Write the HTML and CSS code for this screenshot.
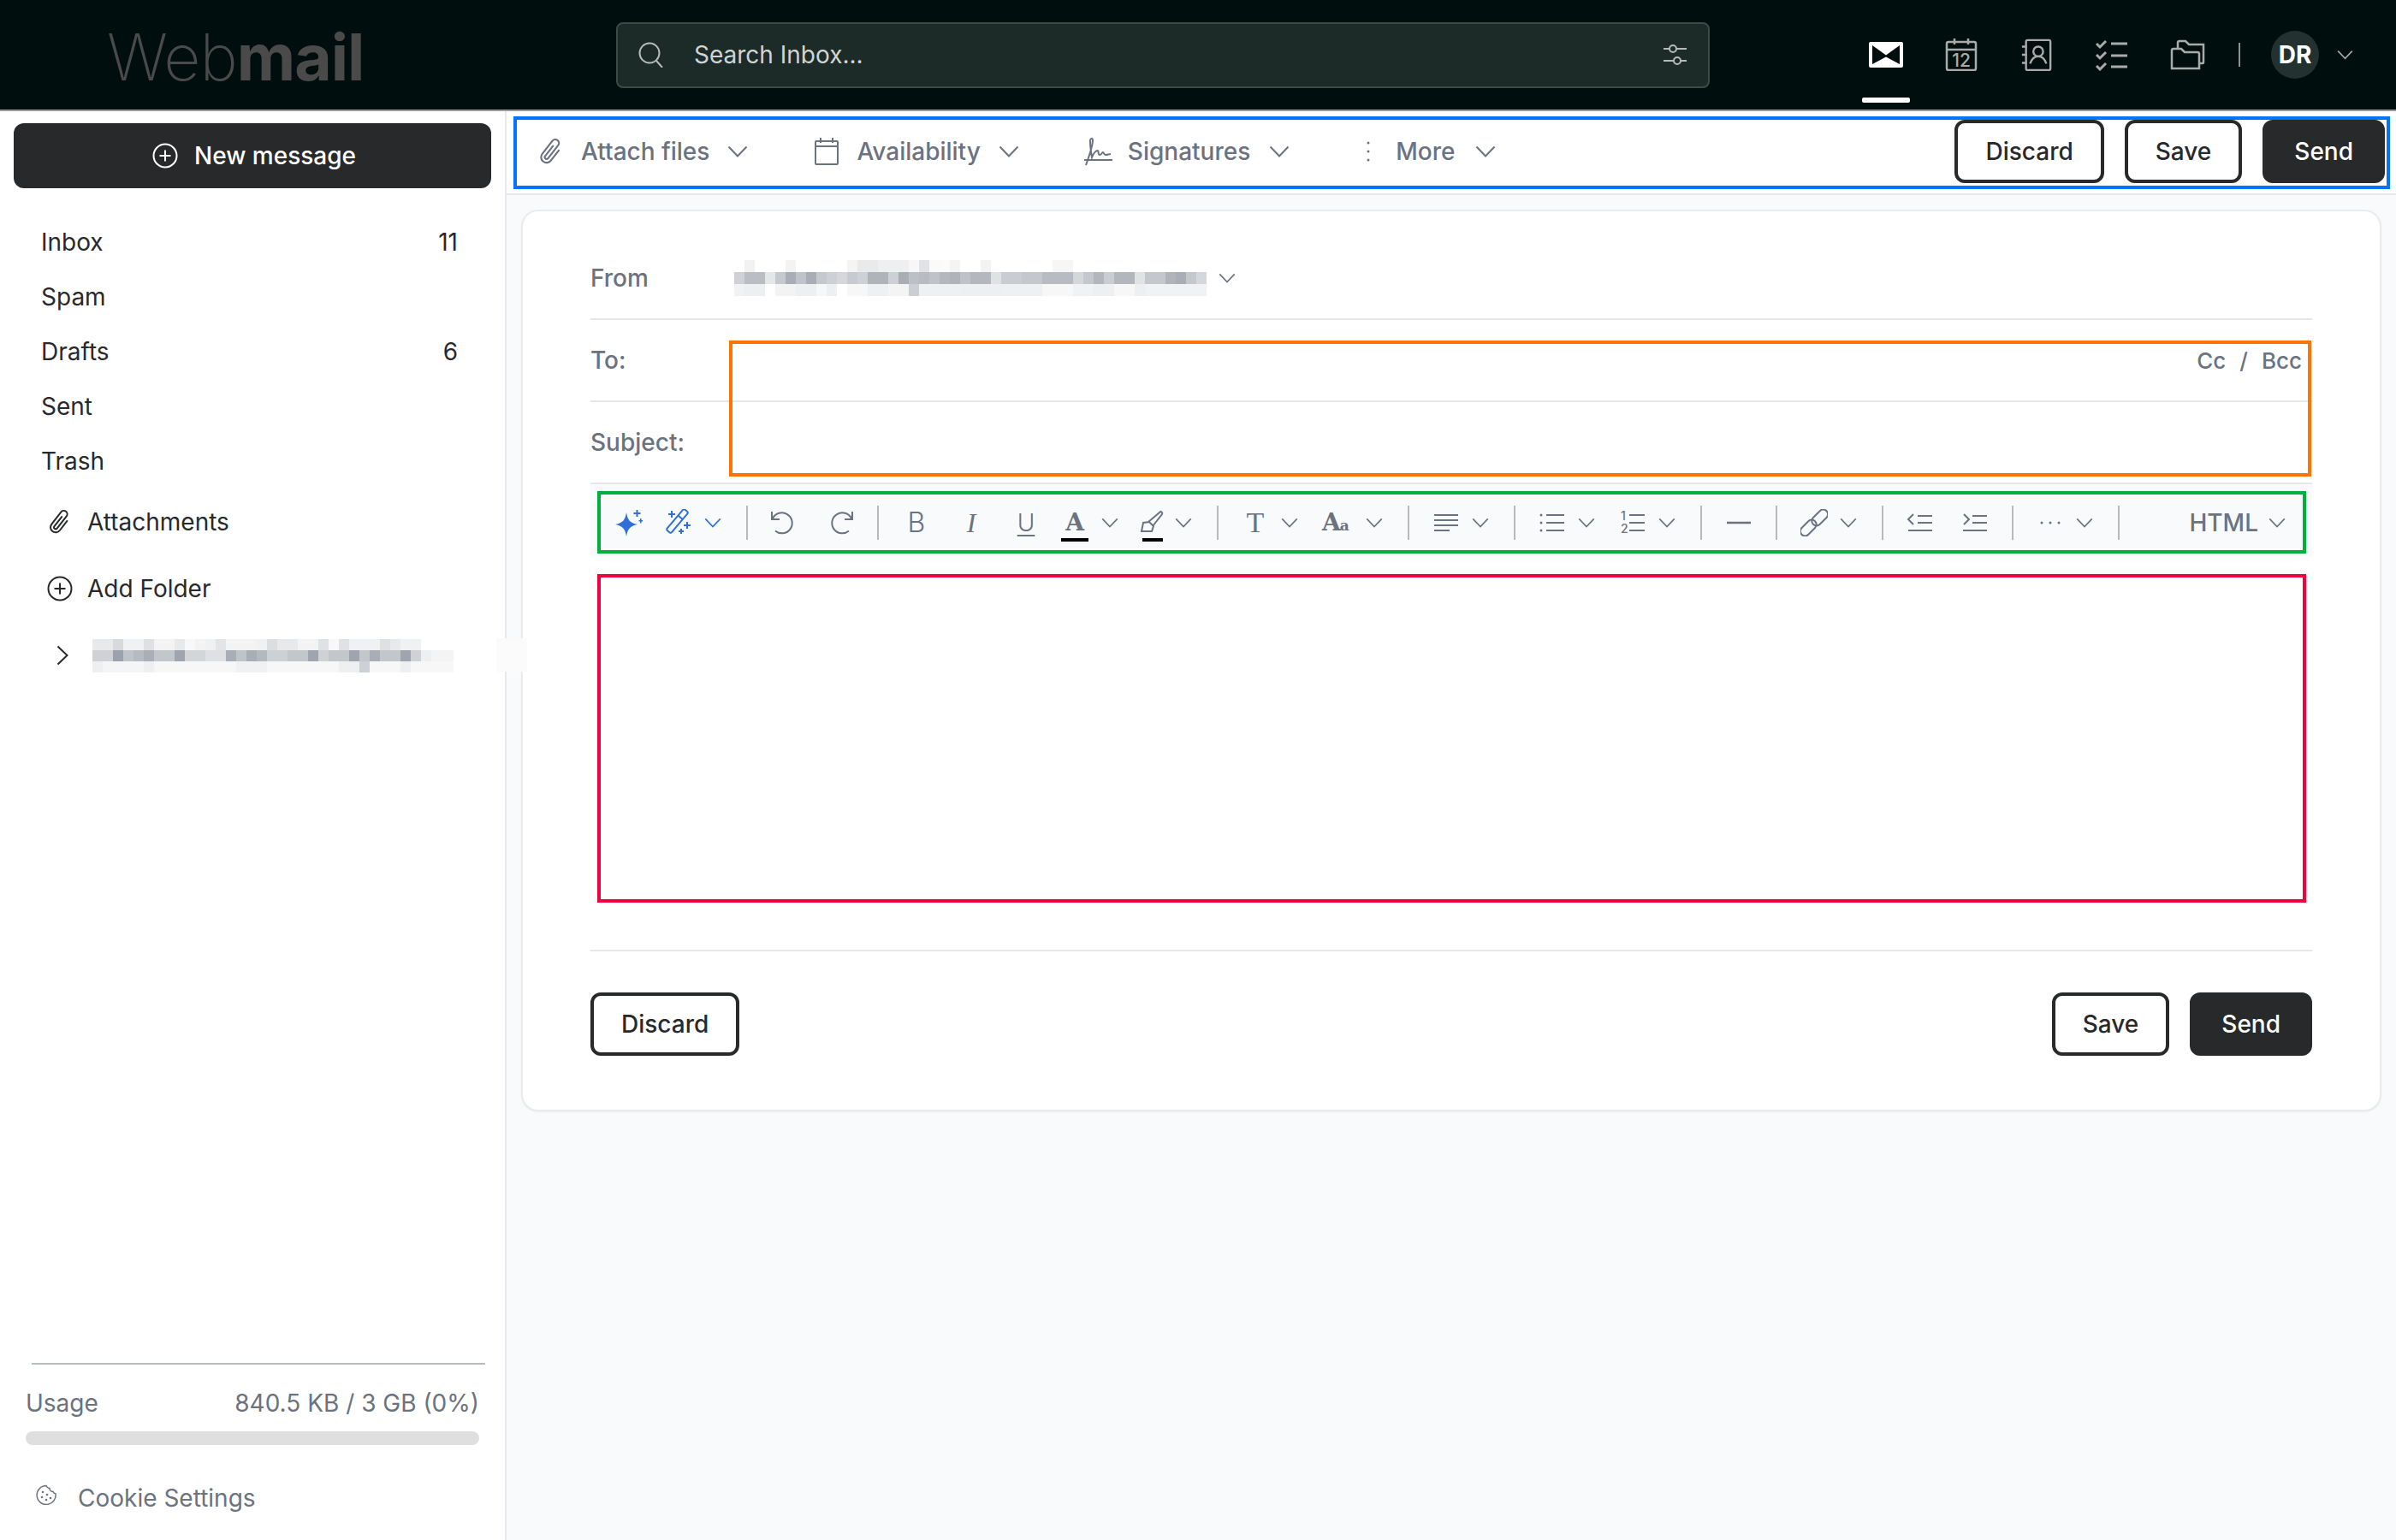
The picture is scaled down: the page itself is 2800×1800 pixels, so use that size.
FILE: index.html
```html
<!DOCTYPE html>
<html lang="en">
<head>
    <meta charset="UTF-8">
    <title>Webmail</title>
    <link rel="stylesheet" href="styles.css">
</head>
<body>

<svg class="sprite" aria-hidden="true">
    <symbol id="chev" viewBox="0 0 24 14"><path d="M1.5 1.5 12 12.5 22.500 1.500" fill="none" stroke="currentColor" stroke-width="2"/></symbol>
    <symbol id="clip" viewBox="1.500 0.500 13 15"><path transform="rotate(38 8 8)" fill="currentColor" d="M4.500 3a2.500 2.500 0 0 1 5 0v9a1.500 1.500 0 0 1-3 0V5a.5.5 0 0 1 1 0v7a.5.5 0 0 0 1 0V3a1.500 1.500 0 1 0-3 0v9a2.500 2.500 0 0 0 5 0V5a.5.5 0 0 1 1 0v7a3.500 3.500 0 1 1-7 0z"/></symbol>
    <symbol id="plus-circle" viewBox="0 0 30 30"><circle cx="15" cy="15" r="13.500" fill="none" stroke="currentColor" stroke-width="2"/><path d="M15 8.500v13M8.500 15h13" fill="none" stroke="currentColor" stroke-width="2"/></symbol>
</svg>

<header class="topbar">
    <div class="logo"><span class="logo-light">Web</span><span class="logo-bold">mail</span></div>
    <div class="search">
        <svg class="search-icon" viewBox="0 0 30 30"><circle cx="13" cy="13" r="11.500" fill="none" stroke="currentColor" stroke-width="2"/><path d="m21 22 7 8" fill="none" stroke="currentColor" stroke-width="2"/></svg>
        <span class="search-text">Search Inbox...</span>
        <svg class="search-filter" viewBox="0 0 28 24"><g fill="none" stroke="currentColor" stroke-width="2"><path d="M1 5h7M16 5h12M1 19h12M21 19h7"/><circle cx="12" cy="5" r="4"/><circle cx="17" cy="19" r="4"/></g></svg>
    </div>
    <nav class="apps">
        <div class="app app-active">
            <svg class="mail-icon" viewBox="0 0 40 30"><rect width="40" height="30" rx="2" fill="#fff"/><path d="M4 4 20 15.500 36 4v22L20 17.500 4 26z" fill="#000f0d"/></svg>
        </div>
        <div class="app">
            <svg class="app-icon" viewBox="0 0 38 38"><g fill="none" stroke="currentColor" stroke-width="2.500"><rect x="2" y="4" width="34" height="33" rx="2"/><path d="M2 13h34M11 0v7M27 0v7"/></g><text class="cal-day" x="19" y="33" text-anchor="middle">12</text></svg>
        </div>
        <div class="app">
            <svg class="app-icon" viewBox="0 0 38 40"><g fill="none" stroke="currentColor" stroke-width="2.500"><rect x="6" y="2" width="30" height="37" rx="2"/><circle cx="21" cy="16" r="6"/><path d="M11 31c2-6 6-9 10-9s8 3 10 9M1 10h6M1 20h6M1 30h6"/></g></svg>
        </div>
        <div class="app">
            <svg class="app-icon" viewBox="0 0 38 38"><g fill="none" stroke="currentColor" stroke-width="2.500"><path d="m1 6 4 4 7-7M1 19l4 4 7-7M1 32l4 4 7-7" stroke-width="3"/><path d="M18 6h19M18 20h19M18 33h19" stroke-width="3"/></g></svg>
        </div>
        <div class="app">
            <svg class="files-icon" viewBox="0 0 41 36"><g fill="none" stroke="currentColor" stroke-width="2.500"><path d="M2 34V13a2 2 0 0 1 2-2h9l4 4h15a2 2 0 0 1 2 2v17z"/><path d="M9 11V4a2 2 0 0 1 2-2h7l4 4h17v21a1 1 0 0 1-1 1h-4"/></g></svg>
        </div>
    </nav>
    <div class="topbar-sep"></div>
    <div class="avatar">DR</div>
    <svg class="avatar-chev"><use href="#chev"/></svg>
</header>

<div class="layout">
    <aside class="sidebar">
        <button class="new-message">
            <svg class="new-message-icon"><use href="#plus-circle"/></svg>
            New message
        </button>
        <ul class="folders">
            <li class="folder"><span>Inbox</span><span>11</span></li>
            <li class="folder"><span>Spam</span></li>
            <li class="folder"><span>Drafts</span><span>6</span></li>
            <li class="folder"><span>Sent</span></li>
            <li class="folder"><span>Trash</span></li>
        </ul>
        <div class="side-link">
            <svg class="side-link-icon"><use href="#clip"/></svg>
            Attachments
        </div>
        <div class="side-link">
            <svg class="side-link-icon"><use href="#plus-circle"/></svg>
            Add Folder
        </div>
        <div class="account">
            <svg class="account-chev" viewBox="0 0 14 24"><path d="m1.500 1.500 11 10.500-11 10.500" fill="none" stroke="currentColor" stroke-width="2"/></svg>
            <div class="mosaic mosaic-account">
                <div class="acc-row-1"></div>
                <div class="acc-row-2"></div>
                <div class="acc-row-3"></div>
            </div>
            <div class="account-ghost"></div>
        </div>
        <div class="usage">
            <hr class="usage-line">
            <div class="usage-text"><span>Usage</span><span>840.5 KB / 3 GB (0%)</span></div>
            <div class="usage-bar"></div>
            <div class="cookies">
                <svg class="cookie-icon" viewBox="0 0 24 24"><g fill="none" stroke="currentColor" stroke-width="1.500"><path d="M12 1.500c1 2 2 3 4 3 0 2.500 2 4 4 4 .5 1.500 1.500 2 3 2.500A11 11 0 1 1 12 1.500z"/></g><g fill="currentColor"><circle cx="8" cy="9" r="1.300"/><circle cx="13" cy="12" r="1.300"/><circle cx="7" cy="15" r="1.300"/><circle cx="12" cy="18" r="1.300"/><circle cx="17" cy="16" r="1.300"/></g></svg>
                Cookie Settings
            </div>
        </div>
    </aside>

    <main class="main">
        <div class="actions-wrap">
            <div class="actions">
                <div class="action action-attach">
                    <svg class="action-icon"><use href="#clip"/></svg>
                    <span>Attach files</span>
                    <svg class="action-chev"><use href="#chev"/></svg>
                </div>
                <div class="action action-avail">
                    <svg class="action-icon" viewBox="0 0 28 32"><g fill="none" stroke="currentColor" stroke-width="2"><rect x="1" y="4" width="26" height="27" rx="1"/><path d="M1 10h26M7 0v6M21 0v6"/></g></svg>
                    <span>Availability</span>
                    <svg class="action-chev"><use href="#chev"/></svg>
                </div>
                <div class="action action-sign">
                    <svg class="sign-icon" viewBox="0 0 34 34"><g fill="none" stroke="currentColor" stroke-width="2"><path d="M3 33C7 22 11 10 11 4c0-3-3-3-3 1 0 6 1 13 2 19 2-5 5-8 7-8 1 0 0 5 2 5s3-3 4-3 1 3 3 3 4-1 6-1"/><path d="M1 27h33"/></g></svg>
                    <span>Signatures</span>
                    <svg class="action-chev"><use href="#chev"/></svg>
                </div>
                <div class="action action-more">
                    <svg class="more-icon" viewBox="0 0 4 26"><g fill="currentColor"><circle cx="2" cy="3" r="1.500"/><circle cx="2" cy="13" r="1.500"/><circle cx="2" cy="23" r="1.500"/></g></svg>
                    <span>More</span>
                    <svg class="action-chev"><use href="#chev"/></svg>
                </div>
                <div class="action-buttons">
                    <button class="btn">Discard</button>
                    <button class="btn">Save</button>
                    <button class="btn btn-dark">Send</button>
                </div>
            </div>
        </div>

        <section class="card">
            <div class="row">
                <label class="row-label">From</label>
                <div class="mosaic mosaic-from">
                    <div class="from-row-1"></div>
                    <div class="from-row-2"></div>
                    <div class="from-row-3"></div>
                </div>
                <svg class="from-chev"><use href="#chev"/></svg>
            </div>
            <div class="recipients">
                <div class="row">
                    <label class="row-label">To:</label>
                    <div class="cc-bcc"><span>Cc</span><span>/</span><span>Bcc</span></div>
                </div>
                <div class="row">
                    <label class="row-label">Subject:</label>
                </div>
                <div class="recipients-mark"></div>
            </div>

            <div class="editor-bar">
                <div class="tools">
                    <div class="tool-group tool-group-ai">
                        <svg class="tool-icon" viewBox="0 0 32 32"><g fill="#2f6fd8"><path d="M13 4c1.500 9 4 12 13 14-9 2-11.500 5-13 14-1.500-9-4-12-13-14 9-2 11.500-5 13-14z"/><path d="M24.500 1h2v3h3v2h-3v3h-2V6h-3V4h3zM29 11h1.500v2H32v1.500h-1.500v2H29v-2h-1.500V13H29z"/></g></svg>
                        <div class="tool tool-wand">
                            <svg class="tool-icon" viewBox="0 0 32 32"><g fill="none" stroke="#2f6fd8" stroke-width="2" transform="rotate(-50 16.500 14)"><rect x="0.500" y="10.500" width="32" height="7" rx="2"/><path d="M22 10.500v7"/></g><path fill="#2f6fd8" d="M9 2h2v3h3v2h-3v3H9V7H6V5h3zM27 15h2v3h3v2h-3v3h-2v-3h-3v-2h3zM20 23h2v2h2v2h-2v2h-2v-2h-2v-2h2z"/></svg>
                            <svg class="tool-chev tool-chev-blue"><use href="#chev"/></svg>
                        </div>
                    </div>
                    <div class="tool-group tool-group-history">
                        <svg class="tool-icon" viewBox="0 0 32 32"><g fill="none" stroke="currentColor" stroke-width="2"><path d="M4 11a12 12 0 1 1 3 14.500"/><path d="M3 3v9h9"/></g></svg>
                        <svg class="tool-icon" viewBox="0 0 32 32"><g fill="none" stroke="currentColor" stroke-width="2"><path d="M28 11a12 12 0 1 0-3 14.500"/><path d="M29 3v9h-9"/></g></svg>
                    </div>
                    <div class="tool-group tool-group-format">
                        <span class="glyph glyph-bold">B</span>
                        <span class="glyph glyph-italic">I</span>
                        <span class="glyph glyph-under">U</span>
                        <div class="tool tool-color">
                            <span class="glyph glyph-color color-a">A</span>
                            <svg class="tool-chev"><use href="#chev"/></svg>
                        </div>
                        <div class="tool tool-color">
                            <span class="color-b"><svg class="tool-icon" viewBox="0 0 32 32"><g fill="none" stroke="currentColor" stroke-width="2"><path d="M6 16 4 26h12l2-6-5-5z"/><path d="m12 15 13-11c2-2 4 0 3 2L17 20"/></g></svg></span>
                            <svg class="tool-chev"><use href="#chev"/></svg>
                        </div>
                    </div>
                    <div class="tool-group">
                        <div class="tool"><span class="glyph glyph-t">T</span><svg class="tool-chev"><use href="#chev"/></svg></div>
                        <div class="tool tool-aa"><span class="glyph glyph-aa">A<small>a</small></span><svg class="tool-chev"><use href="#chev"/></svg></div>
                    </div>
                    <div class="tool-group">
                        <div class="tool">
                            <svg class="tool-icon" viewBox="0 0 32 32"><path d="M2 7h28M2 13h28M2 19h28M2 25h18" fill="none" stroke="currentColor" stroke-width="2"/></svg>
                            <svg class="tool-chev"><use href="#chev"/></svg>
                        </div>
                    </div>
                    <div class="tool-group">
                        <div class="tool">
                            <svg class="tool-icon" viewBox="0 0 32 32"><g fill="currentColor"><circle cx="3" cy="7" r="1.500"/><circle cx="3" cy="16" r="1.500"/><circle cx="3" cy="25" r="1.500"/></g><path d="M9 7h21M9 16h21M9 25h21" fill="none" stroke="currentColor" stroke-width="2"/></svg>
                            <svg class="tool-chev"><use href="#chev"/></svg>
                        </div>
                        <div class="tool">
                            <svg class="tool-icon" viewBox="0 0 32 32"><text class="ol-num" x="2" y="13">1</text><text class="ol-num" x="2" y="28">2</text><path d="M12 7h18M12 16h18M12 25h18" fill="none" stroke="currentColor" stroke-width="2"/></svg>
                            <svg class="tool-chev"><use href="#chev"/></svg>
                        </div>
                    </div>
                    <div class="tool-group tool-group-plain">
                        <svg class="tool-icon" viewBox="0 0 32 32"><path d="M2 16h28" fill="none" stroke="currentColor" stroke-width="2.500"/></svg>
                    </div>
                    <div class="tool-group">
                        <div class="tool">
                            <svg class="tool-icon" viewBox="0 0 32 32"><g fill="none" stroke="currentColor" stroke-width="2" transform="rotate(-45 16 16)"><rect x="-4" y="10" width="22" height="11" rx="5.500"/><rect x="14" y="11" width="22" height="11" rx="5.500"/></g></svg>
                            <svg class="tool-chev"><use href="#chev"/></svg>
                        </div>
                    </div>
                    <div class="tool-group tool-group-plain tool-group-indent">
                        <svg class="tool-icon" viewBox="0 0 32 32"><path d="M8 6 2 12l6 6M13 8h17M13 16h17M2 25h28" fill="none" stroke="currentColor" stroke-width="2"/></svg>
                        <svg class="tool-icon" viewBox="0 0 32 32"><path d="m3 6 6 6-6 6M13 8h17M13 16h17M2 25h28" fill="none" stroke="currentColor" stroke-width="2"/></svg>
                    </div>
                    <div class="tool-group">
                        <div class="tool">
                            <svg class="tool-icon" viewBox="0 0 32 32"><g fill="currentColor"><circle cx="6" cy="16" r="1.500"/><circle cx="16" cy="16" r="1.500"/><circle cx="26" cy="16" r="1.500"/></g></svg>
                            <svg class="tool-chev"><use href="#chev"/></svg>
                        </div>
                    </div>
                    <div class="tool tool-html">
                        <span>HTML</span>
                        <svg class="tool-chev"><use href="#chev"/></svg>
                    </div>
                </div>
            </div>

            <div class="editor-body"></div>

            <div class="card-footer">
                <button class="btn">Discard</button>
                <div class="card-footer-right">
                    <button class="btn">Save</button>
                    <button class="btn btn-dark">Send</button>
                </div>
            </div>
        </section>
    </main>
</div>

</body>
</html>
```

FILE: styles.css
```css
/* base */
* {
    box-sizing: border-box;
}

html, body {
    margin: 0;
    height: 1800px;
    overflow: hidden;
}

body {
    font-family: Inter, "Liberation Sans", sans-serif;
    font-size: 28px;
    color: #28292b;
    background-color: #fff;
}

.sprite {
    position: absolute;
    width: 0;
    height: 0;
}

/* top bar */
.topbar {
    display: flex;
    align-items: center;
    height: 130px;
    padding-right: 50px;
    background-color: #000f0d;
    border-bottom: 2px solid #9a9c9b;
}

.logo {
    width: 720px;
    padding: 5px 0 0 125px;
    font-size: 75px;
    line-height: 1;
    color: #4b4a4a;
    letter-spacing: -1px;
}

.logo-light {
    font-weight: 200;
}

.logo-bold {
    font-weight: 700;
}

.search {
    display: flex;
    align-items: center;
    width: 1278px;
    height: 77px;
    padding: 0 25px 0 24px;
    background-color: #1c2a28;
    border: 2px solid #3d4a48;
    border-radius: 8px;
}

.search-icon {
    width: 30px;
    height: 30px;
    color: #b5baba;
}

.search-text {
    margin-left: 35px;
    color: #d0d4d3;
}

.search-filter {
    width: 28px;
    height: 24px;
    margin-left: auto;
    color: #b5baba;
}

.apps {
    display: flex;
    margin-left: auto;
}

.app {
    position: relative;
    display: flex;
    align-items: center;
    justify-content: center;
    width: 88px;
    height: 128px;
    color: #a8abaa;
}

.app-active::after {
    content: "";
    position: absolute;
    left: 16px;
    bottom: 8px;
    width: 56px;
    height: 6px;
    background-color: #fff;
    border-radius: 2px;
}

.mail-icon {
    width: 40px;
    height: 30px;
}

.app-icon {
    width: 38px;
    height: 38px;
}

.files-icon {
    width: 41px;
    height: 36px;
}

.cal-day {
    font-size: 21px;
    font-weight: 500;
    fill: currentColor;
}

.topbar-sep {
    width: 2px;
    height: 28px;
    margin-left: 16px;
    background-color: #8d9190;
}

.avatar {
    display: flex;
    align-items: center;
    justify-content: center;
    width: 56px;
    height: 56px;
    margin-left: 36px;
    color: #fff;
    font-weight: 700;
    background-color: #233230;
    border-radius: 50%;
}

.avatar-chev {
    width: 19px;
    height: 12px;
    margin-left: 21px;
    color: #a8abaa;
}

/* layout */
.layout {
    display: flex;
    height: 1670px;
}

/* sidebar */
.sidebar {
    display: flex;
    flex-direction: column;
    width: 592px;
    flex-shrink: 0;
    background-color: #fff;
    border-right: 2px solid #e7e9ee;
}

.new-message {
    display: flex;
    align-items: center;
    justify-content: center;
    gap: 19px;
    width: 558px;
    height: 76px;
    margin: 14px 0 0 16px;
    padding: 0 0 0 4px;
    font: inherit;
    font-weight: 500;
    color: #fff;
    background-color: #28292b;
    border: none;
    border-radius: 12px;
}

.new-message-icon {
    width: 30px;
    height: 30px;
}

.folders {
    margin: 31px 0 0;
    padding: 0;
    list-style-type: none;
}

.folder {
    display: flex;
    justify-content: space-between;
    align-items: center;
    height: 64px;
    padding: 0 55px 0 48px;
}

.side-link {
    display: flex;
    align-items: center;
    gap: 17px;
    height: 78px;
    padding-left: 55px;
}

.side-link-icon {
    width: 30px;
    height: 30px;
}

.account {
    position: relative;
    display: flex;
    align-items: center;
    height: 78px;
    padding-left: 66px;
}

.account-chev {
    width: 14px;
    height: 24px;
}

.mosaic div {
    height: 13px;
}

.mosaic-account {
    width: 422px;
    margin-left: 28px;
}

.mosaic-from {
    width: 552px;
}

.mosaic-from div {
    height: 14px;
}

.acc-row-1 {
    background: linear-gradient(90deg, #e8e9eb 0 24px, #d7d9dc 0 36px, #f0f1f2 0 60px, #dfe0e3 0 72px, #f3f3f4 0 96px, #e8e9eb 0 108px, #f8f8f9 0 120px, #f3f3f4 0 132px, #f0f1f2 0 144px, #e3e4e6 0 156px, #f3f3f4 0 192px, #f0f1f2 0 204px, #dbdee0 0 216px, #e8e9eb 0 240px, #f3f3f4 0 264px, #e0e1e4 0 276px, #f8f8f8 0 288px, #e0e1e4 0 300px, #f0f1f2 0 336px, #dfe0e3 0 348px, #e8e9eb 0 360px, #f0f1f2 0 384px, transparent 0);
}

.acc-row-2 {
    background: linear-gradient(90deg, #cfd1d5 0 24px, #9da1ab 0 36px, #c0c3c9 0 48px, #b7bac1 0 60px, #abaeb7 0 72px, #c3c6cb 0 96px, #a0a4ad 0 108px, #d3d5d9 0 132px, #dfe0e3 0 156px, #a9adb6 0 168px, #c0c3c9 0 180px, #a9adb6 0 192px, #b4b8bf 0 204px, #cdd0d4 0 228px, #c3c6cb 0 252px, #a0a4ad 0 264px, #cfd1d5 0 276px, #c3c6cb 0 300px, #a0a4ad 0 312px, #c3c6cb 0 324px, #a9adb6 0 336px, #c3c6cb 0 360px, #a0a4ad 0 372px, #cfd1d5 0 384px, #eeeff0 0 396px, #f4f4f5 0 422px);
}

.acc-row-3 {
    background: linear-gradient(90deg, #eeeff0 0 12px, #f4f5f6 0 60px, #eeeff0 0 72px, #f7f7f8 0 168px, #f0f1f2 0 204px, #f7f7f8 0 288px, #eeeff0 0 312px, #cdd0d4 0 324px, #f7f7f8 0 360px, #eeeff0 0 372px, #f7f7f8 0 422px);
}

.account-ghost {
    position: absolute;
    left: 580px;
    top: 19px;
    width: 36px;
    height: 39px;
    background-color: #fbfbfb;
}

.usage {
    margin-top: auto;
    padding-bottom: 32px;
    color: #6b7280;
}

.usage-line {
    height: 2px;
    margin: 0 23px 0 37px;
    background-color: #b7bcbc;
    border: none;
}

.usage-text {
    display: flex;
    justify-content: space-between;
    margin: 28px 30px 0 30px;
    line-height: 34px;
}

.usage-bar {
    width: 530px;
    height: 16px;
    margin: 16px 0 0 30px;
    background-color: #dfdfdf;
    border-radius: 8px;
}

.cookies {
    display: flex;
    align-items: center;
    gap: 25px;
    margin: 45px 0 0 42px;
    line-height: 34px;
}

.cookie-icon {
    width: 24px;
    height: 24px;
    margin-top: -8px;
}

/* main */
.main {
    flex: 1;
    background-color: #f9fafb;
}

.actions-wrap {
    height: 98px;
    padding: 6px 7px 0 8px;
    background-color: #fff;
    border-bottom: 2px solid #e5e7eb;
}

.actions {
    display: flex;
    height: 85px;
    padding: 0 2px 0 26px;
    color: #6b7280;
    font-weight: 500;
    border: 4px solid #0073ff;
}

.action {
    display: flex;
    align-items: center;
    gap: 21px;
    height: 74px;
    margin-right: 76px;
}

.action-attach {
    margin-right: 78px;
}

.action-avail {
    margin-right: 75px;
}

.action-icon {
    width: 28px;
    height: 32px;
}

.action-chev {
    width: 24px;
    height: 14px;
}

.action-sign {
    gap: 18px;
    margin-right: 0;
}

.action-sign .action-chev {
    margin-left: 4px;
}

.sign-icon {
    width: 34px;
    height: 34px;
}

.action-more {
    margin-right: 0;
    margin-left: 90px;
    gap: 30px;
}

.action-more .action-chev {
    margin-left: -7px;
}

.more-icon {
    width: 4px;
    height: 26px;
}

.action-buttons {
    display: flex;
    gap: 24px;
    margin-left: auto;
}

.btn {
    height: 74px;
    padding: 0 32px;
    font: inherit;
    font-weight: 500;
    color: #28292b;
    background-color: #fff;
    border: 4px solid #28292b;
    border-radius: 12px;
}

.btn-dark {
    padding: 0 33px;
    color: #fff;
    background-color: #28292b;
}

/* compose card */
.card {
    height: 1054px;
    margin: 17px 17px 0 17px;
    padding: 31px 79px 0 79px;
    background-color: #fff;
    border: 2px solid #e9ebef;
    border-radius: 20px;
    box-shadow: 0 1px 2px rgba(0, 0, 0, 0.05);
}

.row {
    display: flex;
    align-items: center;
    height: 96px;
    border-bottom: 2px solid #e5e7eb;
}

.row-label {
    width: 168px;
    flex-shrink: 0;
    color: #6b7280;
    font-weight: 500;
}

.from-chev {
    width: 20px;
    height: 12px;
    margin-left: 14px;
    color: #6b7280;
}

.from-row-1 {
    background: linear-gradient(90deg, transparent 0 12px, #f2f2f3 0 24px, transparent 0 60px, #f3f3f4 0 72px, transparent 0 132px, #f4f4f5 0 144px, #e9eaec 0 168px, #eeeff0 0 204px, #f7f7f8 0 216px, #e0e2e5 0 228px, #fafafa 0 240px, #fbfbfb 0 252px, #f4f4f5 0 264px, transparent 0 288px, #f3f3f4 0 300px, transparent 0 372px, #f6f6f7 0 396px, transparent 0);
}

.from-row-2 {
    background: linear-gradient(90deg, #cfd1d6 0 12px, #babdc3 0 36px, #e4e6e8 0 48px, #c5c8cc 0 60px, #a9adb6 0 72px, #c0c3c9 0 84px, #a9adb6 0 96px, #c5c8cc 0 108px, #cdd0d4 0 120px, #d5d7da 0 132px, #c7cad0 0 144px, #cdd0d4 0 156px, #afb3ba 0 180px, #cdd0d4 0 192px, #a9adb6 0 204px, #bcc0c6 0 216px, #b8bcc2 0 228px, #bfc2c8 0 240px, #b4b7be 0 252px, #b0b4ba 0 264px, #bfc2c8 0 276px, #b4b8be 0 300px, #dfe1e4 0 312px, #c9ccd0 0 336px, #c4c7cc 0 360px, #b8bbc2 0 396px, #d5d7da 0 408px, #c4c7cc 0 420px, #b3b6bd 0 432px, #c9ccd0 0 444px, #b3b6bd 0 468px, #e0e2e4 0 480px, #c4c7cc 0 504px, #b0b3ba 0 516px, #a9adb6 0 528px, #c4c7cc 0 540px, #d5d7da 0 552px);
}

.from-row-3 {
    background: linear-gradient(90deg, #f1f2f3 0 12px, #eeeff0 0 36px, transparent 0 48px, #f3f3f4 0 72px, #eeeff0 0 96px, #f7f7f8 0 108px, #eeeff0 0 120px, transparent 0 132px, #f7f7f8 0 156px, #eff0f1 0 180px, #f4f4f5 0 204px, #ccced3 0 216px, #eff0f1 0 264px, #eeeff0 0 312px, #eff0f1 0 360px, #f7f7f8 0 396px, #f1f2f3 0 420px, #eeeff0 0 444px, #f7f7f8 0 468px, #eeeff0 0 480px, #f1f2f3 0 552px);
}

.recipients {
    position: relative;
}

.recipients-mark {
    position: absolute;
    left: 162px;
    top: 24px;
    width: 1849px;
    height: 159px;
    border: 4px solid #ff7300;
}

.cc-bcc {
    display: flex;
    gap: 16px;
    margin-left: auto;
    margin-right: 12px;
    font-size: 26px;
    font-weight: 500;
    color: #6b7280;
}

/* editor toolbar */
.editor-bar {
    height: 85px;
    padding: 8px 7px 0 8px;
    background-color: #f9fafb;
}

.tools {
    display: flex;
    align-items: center;
    height: 73px;
    color: #6b7280;
    border: 4px solid #00b03e;
}

.tool-group {
    display: flex;
    align-items: center;
    gap: 28px;
    height: 40px;
    padding: 0 29px 0 27px;
    border-right: 2px solid #b7babd;
}

.tool-group-ai {
    padding-left: 17px;
    gap: 24px;
}

.tool-group-history {
    gap: 36px;
    padding: 0 26px 0 25px;
}

.tool-group-format {
    gap: 32px;
    padding-left: 28px;
}

.tool-group-plain {
    padding-right: 27px;
}

.tool-group-indent {
    gap: 32px;
}

.tool {
    display: flex;
    align-items: center;
    gap: 14px;
}

.tool-wand {
    gap: 16px;
}

.tool-color {
    gap: 15px;
    margin-left: -7px;
}

.tool-color + .tool-color {
    gap: 11px;
    margin-left: -9px;
}

.tool-aa {
    gap: 19px;
}

.tool-icon {
    display: block;
    width: 32px;
    height: 32px;
}

.tool-chev {
    width: 20px;
    height: 12px;
}

.tool-chev-blue {
    color: #2f6fd8;
}

.glyph {
    position: relative;
    display: block;
    width: 32px;
    height: 32px;
    line-height: 32px;
    text-align: center;
}

.glyph-bold {
    font-size: 32px;
    font-weight: 300;
}

.glyph-italic {
    font-family: "Liberation Serif", serif;
    font-size: 32px;
    font-style: italic;
}

.glyph-under {
    font-size: 28px;
    font-weight: 300;
    text-decoration: underline;
    text-underline-offset: 4px;
    text-decoration-thickness: 2px;
}

.glyph-color {
    font-family: "DejaVu Serif", serif;
    font-size: 28px;
    font-weight: 700;
}

.color-a::after {
    content: "";
    position: absolute;
    left: 0;
    bottom: -6px;
    width: 32px;
    height: 4px;
    background-color: #000;
}

.color-b {
    position: relative;
    display: block;
}

.color-b::after {
    content: "";
    position: absolute;
    left: 5px;
    bottom: -6px;
    width: 24px;
    height: 4px;
    background-color: #000;
}

.glyph-t {
    font-family: "Liberation Serif", serif;
    font-size: 34px;
}

.glyph-aa {
    font-family: "DejaVu Serif", serif;
    font-size: 28px;
    font-weight: 700;
    white-space: nowrap;
    text-align: left;
    letter-spacing: -1px;
}

.glyph-aa small {
    font-size: 17px;
}

.ol-num {
    font-size: 14px;
    font-weight: 500;
    fill: currentColor;
}

.tool-html {
    margin-left: auto;
    margin-right: 20px;
    gap: 12px;
    font-weight: 500;
}

/* editor */
.editor-body {
    height: 384px;
    margin: 20px 7px 0 8px;
    background-color: #fff;
    border: 4px solid #f0003c;
}

.card-footer {
    display: flex;
    justify-content: space-between;
    margin-top: 55px;
    padding-top: 48px;
    border-top: 2px solid #e5e7eb;
}

.card-footer-right {
    display: flex;
    gap: 24px;
}
```
